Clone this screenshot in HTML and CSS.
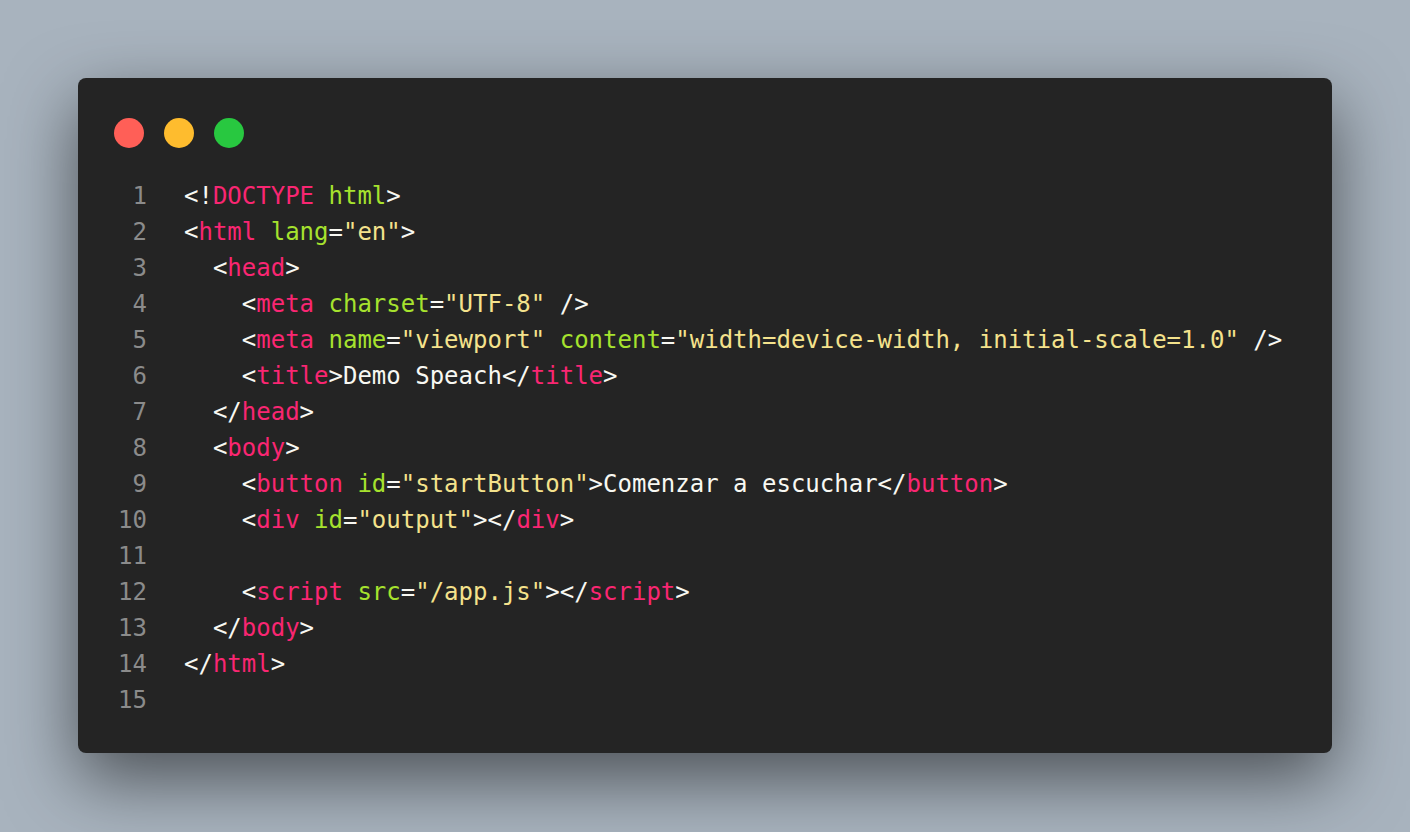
FILE: index.html
```html
<!DOCTYPE html>
<html lang="en">
<head>
<meta charset="UTF-8">
<title>Code</title>
<link rel="stylesheet" href="styles.css">
</head>
<body>
<div class="frame">
  <div class="window">
    <div class="dots">
      <span class="dot red"></span>
      <span class="dot yellow"></span>
      <span class="dot green"></span>
    </div>
    <div class="code">
      <div class="gutter">
        <div>1</div><div>2</div><div>3</div><div>4</div><div>5</div><div>6</div><div>7</div><div>8</div><div>9</div><div>10</div><div>11</div><div>12</div><div>13</div><div>14</div><div>15</div>
      </div>
      <pre class="lines"><span class="p">&lt;!</span><span class="t">DOCTYPE</span> <span class="a">html</span><span class="p">&gt;</span>
<span class="p">&lt;</span><span class="t">html</span> <span class="a">lang</span><span class="p">=</span><span class="s">"en"</span><span class="p">&gt;</span>
  <span class="p">&lt;</span><span class="t">head</span><span class="p">&gt;</span>
    <span class="p">&lt;</span><span class="t">meta</span> <span class="a">charset</span><span class="p">=</span><span class="s">"UTF-8"</span> <span class="p">/&gt;</span>
    <span class="p">&lt;</span><span class="t">meta</span> <span class="a">name</span><span class="p">=</span><span class="s">"viewport"</span> <span class="a">content</span><span class="p">=</span><span class="s">"width=device-width, initial-scale=1.0"</span> <span class="p">/&gt;</span>
    <span class="p">&lt;</span><span class="t">title</span><span class="p">&gt;</span>Demo Speach<span class="p">&lt;/</span><span class="t">title</span><span class="p">&gt;</span>
  <span class="p">&lt;/</span><span class="t">head</span><span class="p">&gt;</span>
  <span class="p">&lt;</span><span class="t">body</span><span class="p">&gt;</span>
    <span class="p">&lt;</span><span class="t">button</span> <span class="a">id</span><span class="p">=</span><span class="s">"startButton"</span><span class="p">&gt;</span>Comenzar a escuchar<span class="p">&lt;/</span><span class="t">button</span><span class="p">&gt;</span>
    <span class="p">&lt;</span><span class="t">div</span> <span class="a">id</span><span class="p">=</span><span class="s">"output"</span><span class="p">&gt;&lt;/</span><span class="t">div</span><span class="p">&gt;</span>

    <span class="p">&lt;</span><span class="t">script</span> <span class="a">src</span><span class="p">=</span><span class="s">"/app.js"</span><span class="p">&gt;&lt;/</span><span class="t">script</span><span class="p">&gt;</span>
  <span class="p">&lt;/</span><span class="t">body</span><span class="p">&gt;</span>
<span class="p">&lt;/</span><span class="t">html</span><span class="p">&gt;</span>
</pre>
    </div>
  </div>
</div>
</body>
</html>
```
FILE: styles.css
```css
html, body {
  margin: 0;
  padding: 0;
}
body {
  width: 1410px;
  height: 832px;
  overflow: hidden;
  background: #a8b3be;
}
.frame {
  padding: 78px 78px 0 78px;
}
.window {
  width: 1254px;
  height: 675px;
  box-sizing: border-box;
  background: #242424;
  border-radius: 8px;
  box-shadow: 0 26px 70px rgba(0, 0, 0, 0.55);
  padding: 40px 36px 36px 36px;
}
.dots {
  display: flex;
  gap: 20px;
  height: 30px;
}
.dot {
  width: 30px;
  height: 30px;
  border-radius: 50%;
  display: block;
}
.red { background: #ff5f57; }
.yellow { background: #febc2e; }
.green { background: #28c840; }
.code {
  display: flex;
  margin-top: 30px;
  font-family: "DejaVu Sans Mono", monospace;
  font-size: 24px;
  line-height: 36px;
}
.gutter {
  width: 33px;
  text-align: right;
  color: #8b8b8b;
  margin-right: 37px;
}
.lines {
  margin: 0;
  font: inherit;
  color: #f8f8f2;
  white-space: pre;
}
.t { color: #f92672; }
.a { color: #a6e22e; }
.s { color: #f4e28c; }
.p { color: #f8f8f2; }
```
